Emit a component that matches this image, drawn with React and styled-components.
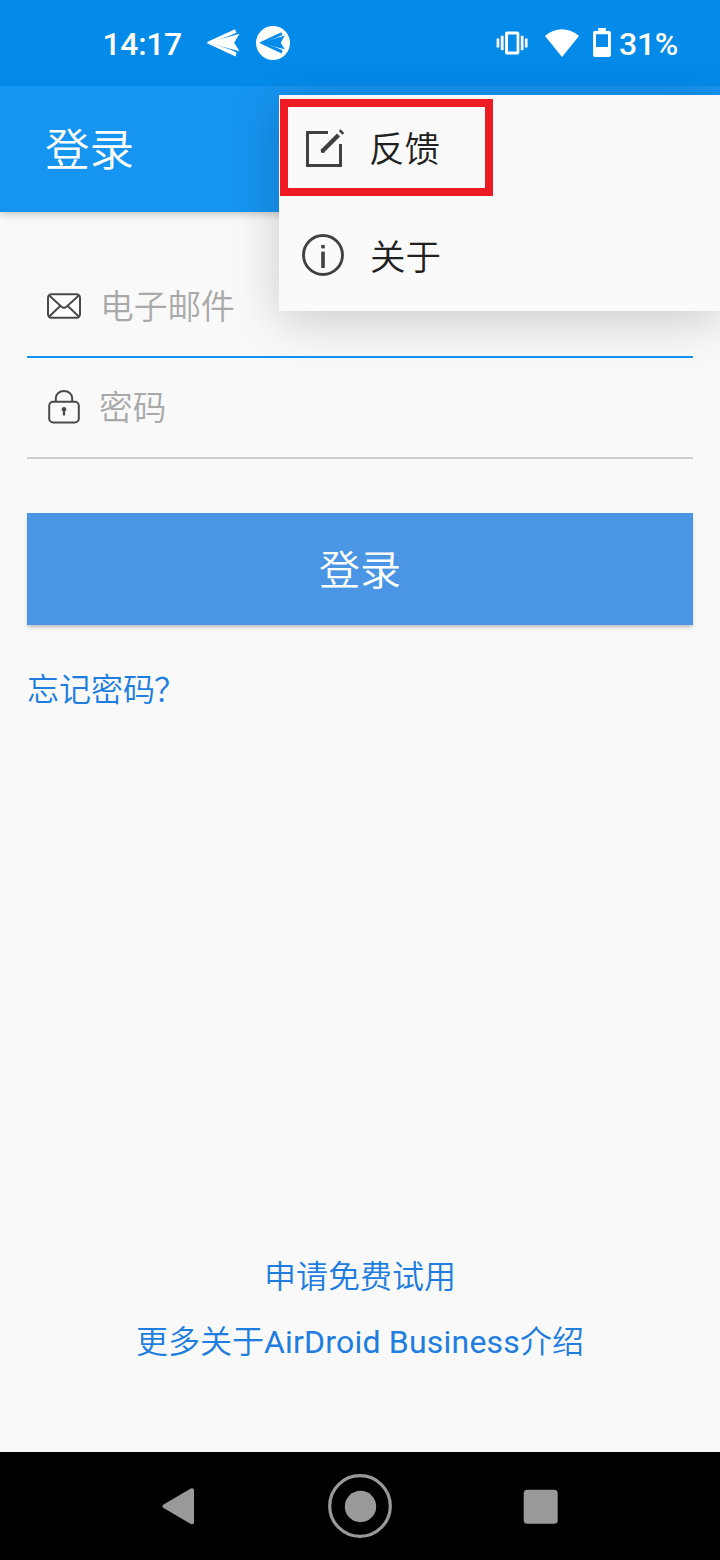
import React from "react";
import styled, { createGlobalStyle } from "styled-components";

const Global = createGlobalStyle`
  * { box-sizing: border-box; }
  body {
    margin: 0;
    background: #f9f9f9;
    font-family: Roboto, "Noto Sans CJK SC", sans-serif;
    font-weight: 400;
  }
  svg { display: block; flex: none; }
`;

const Screen = styled.div`
  position: relative;
  display: flex;
  flex-direction: column;
  width: 720px;
  height: 1560px;
  overflow: hidden;
  background: #f9f9f9;
`;

const StatusBar = styled.header`
  position: relative;
  z-index: 1;
  display: flex;
  align-items: center;
  justify-content: space-between;
  height: 86px;
  padding: 0 42px 0 102.5px;
  background: #048ae9;
  color: #fff;
`;

const StatusGroup = styled.div`
  display: flex;
  align-items: center;
`;

const StatusText = styled.span`
  font-size: 32px;
  font-weight: 500;
  line-height: 40px;
  padding-top: 2px;
  letter-spacing: -0.35px;
`;

const StatusIcon = styled.span`
  display: flex;
  margin-right: ${(p) => p.$after || 0}px;
`;

const ClockSlot = styled.div`
  display: flex;
  width: 103.5px;
`;

const AppBar = styled.div`
  display: flex;
  align-items: center;
  height: 126px;
  padding: 4px 45px 0;
  background: #1694f1;
  color: #fff;
  box-shadow: 0 2px 8px rgba(0, 0, 0, 0.22);
`;

const Title = styled.h1`
  margin: 0;
  font-size: 44.5px;
  font-weight: 350;
  line-height: 60px;
`;

const Main = styled.main`
  display: flex;
  flex: 1;
  flex-direction: column;
  padding: 45px 27px 0;
  font-weight: 350;
`;

const Field = styled.label`
  display: flex;
  align-items: center;
  gap: ${(p) => p.$gap}px;
  height: 101px;
  padding: 0 0 2px 20px;
  border-bottom: 2px solid ${(p) => (p.$active ? "#1694f1" : "#cdcdcd")};
`;

const Placeholder = styled.span`
  padding-top: 5px;
  color: #a9a9a9;
  font-size: 33.7px;
  line-height: 48px;
`;

const SubmitButton = styled.button`
  height: 112px;
  margin: 54px 0 0;
  padding: 4px 0 0;
  border: 0;
  background: #4a96e5;
  color: #fff;
  font: inherit;
  font-size: 41px;
  line-height: 56px;
  box-shadow: 0 3px 4px -1px rgba(0, 0, 0, 0.25);
`;

const TextLink = styled.a`
  color: #207de0;
  font-size: 32px;
  line-height: 48px;
`;

const Latin = styled.span`
  font-weight: 400;
  letter-spacing: 0.2px;
`;

const Punctuation = styled.span`
  margin-left: -1px;
`;

const ForgotRow = styled.div`
  display: flex;
  padding-top: 41px;
`;

const FooterLinks = styled.nav`
  display: flex;
  flex-direction: column;
  align-items: center;
  gap: 17px;
  margin-top: auto;
  padding-bottom: 86px;
`;

const Menu = styled.div`
  position: absolute;
  z-index: 2;
  top: 95px;
  left: 279px;
  width: 441px;
  height: 216px;
  padding-top: 4px;
  background: #fafafa;
  box-shadow: 0 9px 46px rgba(0, 0, 0, 0.19);
`;

const MenuItem = styled.div`
  display: flex;
  align-items: center;
  gap: ${(p) => p.$gap}px;
  width: 213px;
  height: ${(p) => p.$height}px;
  margin-left: 1px;
  padding-left: ${(p) => p.$inset}px;
  border: ${(p) => (p.$marked ? "8px solid #ee1b23" : "0")};
`;

const MenuLabel = styled.span`
  padding-top: 5px;
  color: #212121;
  font-size: 35.5px;
  font-weight: 350;
  line-height: 52px;
`;

const NavBar = styled.footer`
  display: flex;
  align-items: center;
  justify-content: space-between;
  height: 108px;
  padding: 0 162px;
  background: #000;
`;

const ArrowShape = () => (
  <>
    <path d="M0.5 14.300 L29 1.200 L30.500 4.800 L24 7.600 L9 13 L3 14.700Z" />
    <path d="M1.500 14.700 L9 12.600 L24 8.400 L33.500 5.700 L28.200 14.700 L33.500 23.300 L24 20.800 L9 16.700Z" />
    <path d="M0.5 15 L3 14.700 L9 16.400 L24 21.600 L30.500 24.500 L29.500 28.600 Z" />
  </>
);

const PlaneIcon = () => (
  <svg width="34" height="30" viewBox="0 0 34 30" fill="#fff">
    <ArrowShape />
  </svg>
);

const PlaneBadgeIcon = () => (
  <svg width="34" height="34" viewBox="0 0 34 34">
    <circle cx="17" cy="17" r="17" fill="#fff" />
    <g fill="#048ae9" transform="translate(3 5.4) scale(.77)">
      <ArrowShape />
    </g>
  </svg>
);

const VibrateIcon = () => (
  <svg width="32" height="24" viewBox="0 0 32 24" fill="#fff">
    <path fillRule="evenodd" d="M11 0.4h10.4a1.9 1.9 0 0 1 1.9 1.9v19.4a1.9 1.9 0 0 1-1.9 1.9H11a1.9 1.9 0 0 1-1.9-1.9V2.3A1.9 1.9 0 0 1 11 .4zM12 3.5v17h8.6v-17z" />
    <rect x="0.6" y="7.5" width="2.7" height="9" />
    <rect x="4.8" y="4.8" width="2.8" height="14.4" />
    <rect x="24.8" y="4.8" width="2.7" height="14.4" />
    <rect x="28.9" y="7.5" width="2.7" height="9" />
  </svg>
);

const WifiIcon = () => (
  <svg width="34" height="28" viewBox="0 0 34 28" fill="#fff">
    <path d="M17 28 L0 7 C10 -2 24 -2 34 7 Z" />
  </svg>
);

const BatteryIcon = () => (
  <svg width="18" height="31" viewBox="0 0 18 31" fill="#fff">
    <path fillRule="evenodd" d="M5.2 0h7.6v3H16.300a1.600 1.600 0 0 1 1.600 1.600V27.200a1.700 1.700 0 0 1-1.700 1.700H1.800A1.700 1.700 0 0 1 .1 27.200V4.600A1.600 1.600 0 0 1 1.700 3H5.200zM3 6.200V19h12V6.200z" />
  </svg>
);

const MailIcon = () => (
  <svg width="34" height="26" viewBox="0 0 34 26" fill="none" stroke="#4a4a4a" strokeWidth="2">
    <rect x="1" y="1.200" width="32" height="23.600" rx="3.500" fill="#fff" />
    <path d="M2 2.200 L14.500 13.800 Q17 16 19.500 13.800 L32 2.200 M2 23.800 L13.200 13 M32 23.800 L20.800 13" />
  </svg>
);

const LockIcon = () => (
  <svg width="34" height="34" viewBox="0 0 34 34" fill="none" stroke="#4a4a4a" strokeWidth="2">
    <path d="M8.800 11.500V8.500C8.800 4 12.500 1 17 1s8.200 3 8.200 7.500v3" />
    <rect x="2.200" y="11.700" width="29.600" height="20.800" rx="4" fill="#fafafa" />
    <circle cx="17" cy="19.200" r="2.300" fill="#4a4a4a" stroke="none" />
    <path d="M17 19v6.500" strokeWidth="2.200" />
  </svg>
);

const EditIcon = () => (
  <svg width="40" height="40" viewBox="0 0 40 40" fill="none" stroke="#414141" strokeWidth="3">
    <path d="M23 4.500H2.500v33h33V16" />
    <path d="M17 23.500 L33.500 7" strokeWidth="4.400" />
    <path d="M16 20.500v4.300h4z" fill="#414141" stroke="none" />
    <path d="M34.700 2.200 L38.300 5.800" strokeWidth="2.600" />
  </svg>
);

const InfoIcon = () => (
  <svg width="42" height="44" viewBox="0 0 42 44" fill="#414141">
    <circle cx="21" cy="21" r="19.500" fill="none" stroke="#414141" strokeWidth="2.900" />
    <rect x="19.200" y="11" width="3.600" height="3.400" />
    <rect x="19.200" y="17.600" width="3.600" height="16.400" />
  </svg>
);

const BackIcon = () => (
  <svg width="33" height="38" viewBox="0 0 33 38" fill="#999">
    <path d="M1.200 17.700 L28.800 1.500 Q32 .500 32 3.500 V35 Q32 38 28.800 37 L1.200 20.800 Q-.500 19.250 1.200 17.700Z" />
  </svg>
);

const HomeIcon = () => (
  <svg width="68" height="66" viewBox="0 0 68 66">
    <circle cx="35" cy="33" r="30.300" fill="none" stroke="#999" strokeWidth="3.200" />
    <circle cx="35.500" cy="33.500" r="15.700" fill="#999" />
  </svg>
);

const RecentsIcon = () => (
  <svg width="35" height="35" viewBox="0 0 35 35">
    <rect x=".700" y=".700" width="34" height="34" rx="3.500" fill="#999" />
  </svg>
);

export default function App() {
  return (
    <>
      <Global />
      <Screen>
        <StatusBar>
          <StatusGroup>
            <ClockSlot>
              <StatusText>14:17</StatusText>
            </ClockSlot>
            <StatusIcon $after={16}>
              <PlaneIcon />
            </StatusIcon>
            <StatusIcon>
              <PlaneBadgeIcon />
            </StatusIcon>
          </StatusGroup>
          <StatusGroup>
            <StatusIcon $after={17}>
              <VibrateIcon />
            </StatusIcon>
            <StatusIcon $after={14}>
              <WifiIcon />
            </StatusIcon>
            <StatusIcon $after={8}>
              <BatteryIcon />
            </StatusIcon>
            <StatusText>31%</StatusText>
          </StatusGroup>
        </StatusBar>
        <AppBar>
          <Title>登录</Title>
        </AppBar>
        <Main>
          <Field $active $gap={19}>
            <MailIcon />
            <Placeholder>电子邮件</Placeholder>
          </Field>
          <Field $gap={18}>
            <LockIcon />
            <Placeholder>密码</Placeholder>
          </Field>
          <SubmitButton type="button">登录</SubmitButton>
          <ForgotRow>
            <TextLink>
              忘记密码<Punctuation>？</Punctuation>
            </TextLink>
          </ForgotRow>
          <FooterLinks>
            <TextLink>申请免费试用</TextLink>
            <TextLink>
              更多关于<Latin>AirDroid Business</Latin>介绍
            </TextLink>
          </FooterLinks>
        </Main>
        <NavBar>
          <BackIcon />
          <HomeIcon />
          <RecentsIcon />
        </NavBar>
        <Menu>
          <MenuItem $marked $height={97} $inset={17} $gap={24}>
            <EditIcon />
            <MenuLabel>反馈</MenuLabel>
          </MenuItem>
          <MenuItem $height={119} $inset={22} $gap={26}>
            <InfoIcon />
            <MenuLabel>关于</MenuLabel>
          </MenuItem>
        </Menu>
      </Screen>
    </>
  );
}
